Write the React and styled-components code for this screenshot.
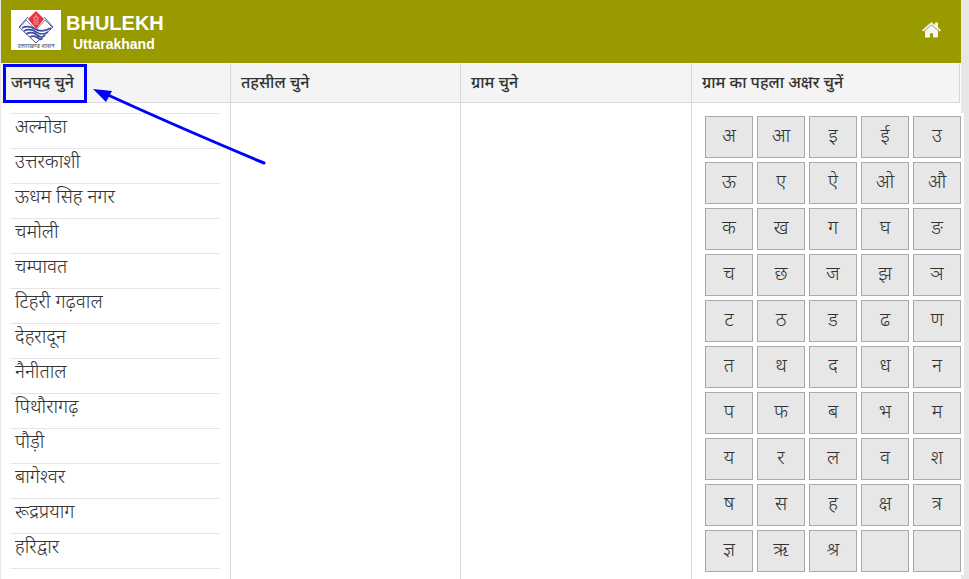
import React, { useState } from 'react'
import styled, { createGlobalStyle } from 'styled-components'

const GlobalStyle = createGlobalStyle`
    * {
        box-sizing: border-box;
    }
    body {
        margin: 0;
        background-color: #e7e7e7;
        color: #333;
        font-family: "Noto Sans", "Noto Sans Devanagari", "Liberation Sans", sans-serif;
    }
`

const Page = styled.div`
    position: relative;
    display: flex;
    flex-direction: column;
    min-height: 100vh;
    margin: 0 8px 0 1px;
    background-color: #fff;
`

const Header = styled.header`
    display: flex;
    height: 63px;
    padding: 10px 20px 0 10px;
    background-color: #999900;
`

const Logo = styled.svg`
    width: 50px;
    height: 40px;
    margin-right: 5px;
    background-color: #fff;
`

const Brand = styled.div`
    flex: 1;
    color: #fff;
    font-family: "Liberation Sans", Arial, sans-serif;
    font-weight: bold;
`

const BrandName = styled.h1`
    margin: 0;
    font-size: 20px;
    line-height: 26px;
`

const BrandState = styled.p`
    margin: 0 0 0 7px;
    font-size: 14px;
    line-height: 16px;
`

const HomeLink = styled.a`
    display: flex;
    align-items: center;
    height: 40px;
    color: #f5f5f5;
`

const Columns = styled.main`
    flex: 1;
    display: grid;
    grid-template-columns: 230fr 230fr 231fr 269fr;
`

const Column = styled.section`
    min-width: 0;
    border-right: 1px solid #d8d8d8;
    &:last-child {
        border-right: none;
    }
`

const ColumnHead = styled.div`
    height: 40px;
    padding-left: 10px;
    background-color: #f4f4f4;
    border-bottom: 1px solid #d8d8d8;
    ${Column}:last-child & {
        margin-right: 1px;
        border-right: 1px solid #d8d8d8;
    }
`

const ColumnTitle = styled.h2`
    position: relative;
    display: inline-block;
    margin: 0;
    font-size: 16px;
    font-weight: 500;
    line-height: 38px;
`

const Highlight = styled.span`
    position: absolute;
    top: 1px;
    bottom: -2px;
    left: -8px;
    right: -13px;
    border: 3px solid #0000ff;
`

const Pointer = styled.svg`
    position: absolute;
    top: 84px;
    left: 87px;
    width: 182px;
    height: 84px;
    pointer-events: none;
`

const DistrictList = styled.ul`
    list-style: none;
    margin: 10px;
    padding: 0;
    border-top: 1px solid #e5e5e5;
`

const District = styled.button`
    display: block;
    width: 100%;
    height: 35px;
    padding: 0 4px 9px;
    border: none;
    border-bottom: 1px solid #e5e5e5;
    background-color: ${props => props.$active ? '#f4f4f4' : 'transparent'};
    color: #333;
    font-family: inherit;
    font-size: 19px;
    font-weight: 300;
    line-height: 25px;
    text-align: left;
    cursor: pointer;
`

const LetterPanel = styled.div`
    display: grid;
    grid-template-columns: repeat(5, 1fr);
    gap: 4px;
    margin: 10px -3px 0 10px;
    padding: 3px;
    background-color: #fff;
`

const Letter = styled.button`
    height: 42px;
    padding: 0 0 4px;
    border: 1px solid #aaa;
    background-color: ${props => props.$active ? '#d4d4d4' : '#e7e7e7'};
    color: #333;
    font-family: inherit;
    font-size: 19px;
    font-weight: 300;
    line-height: 36px;
    cursor: pointer;
`

const districts = [
    'अल्मोडा', 'उत्तरकाशी', 'ऊधम सिह नगर', 'चमोली', 'चम्पावत', 'टिहरी गढ़वाल', 'देहरादून',
    'नैनीताल', 'पिथौरागढ़', 'पौड़ी', 'बागेश्वर', 'रूद्रप्रयाग', 'हरिद्वार'
]

const letters = [
    'अ', 'आ', 'इ', 'ई', 'उ',
    'ऊ', 'ए', 'ऐ', 'ओ', 'औ',
    'क', 'ख', 'ग', 'घ', 'ङ',
    'च', 'छ', 'ज', 'झ', 'ञ',
    'ट', 'ठ', 'ड', 'ढ', 'ण',
    'त', 'थ', 'द', 'ध', 'न',
    'प', 'फ', 'ब', 'भ', 'म',
    'य', 'र', 'ल', 'व', 'श',
    'ष', 'स', 'ह', 'क्ष', 'त्र',
    'ज्ञ', 'ऋ', 'श्र', '', ''
]

const StateLogo = () => (
    <Logo viewBox="0 0 50 40" role="img" aria-label="Uttarakhand">
        <path d="M17 7 L8 17 L25 33 L42 17 L33 7" fill="none" stroke="#4a56a8" />
        <path d="M9 17 L15 10 L25 20 L34 10 L41 17" fill="none" stroke="#4a56a8" strokeWidth="0.8" />
        <path d="M11 18 Q17 15 24 19 T40 18 M13 21 Q19 18 25 22 T37 22 M15 24 Q21 21 26 25 T34 25 M19 27 Q23 25 27 28 T31 28" fill="none" stroke="#3f4b9f" strokeWidth="1.7" />
        <path d="M25 1 L33 9 L25 19 L17 9 Z" fill="#e8323c" />
        <path d="M25 4 v3 M23 7 h4 v3 h-4 Z M22 12 h6 M23 14 h4" stroke="#f6b5b5" strokeWidth="0.8" fill="none" />
        <text x="25" y="38" textAnchor="middle" fontSize="6" fill="#555">उत्तराखण्ड शासन</text>
    </Logo>
)

const HomeIcon = () => (
    <svg width="19" height="16" viewBox="0 0 19 16" fill="currentColor" aria-hidden="true">
        <path d="M9.5 0 L13 3 V0.5 H16 V5.6 L19 8.3 L18 9.5 L9.5 2.4 L1 9.5 L0 8.3 Z" />
        <path d="M9.5 3.3 L16 8.8 V15.5 H11 V11.2 H8 V15.5 H3 V8.8 Z" />
    </svg>
)

const App = () => {
    const [district, setDistrict] = useState(null)
    const [letter, setLetter] = useState(null)

  return (
    <>
        <GlobalStyle />
        <Page>
            <Header>
                <StateLogo />
                <Brand>
                    <BrandName>BHULEKH</BrandName>
                    <BrandState>Uttarakhand</BrandState>
                </Brand>
                <HomeLink href="#" aria-label="Home"><HomeIcon /></HomeLink>
            </Header>
            <Columns>
                <Column>
                    <ColumnHead>
                        <ColumnTitle>जनपद चुने<Highlight /></ColumnTitle>
                    </ColumnHead>
                    <DistrictList>
                        {
                            districts.map((item) => (
                                <li key={item}>
                                    <District $active={item === district} onClick={() => setDistrict(item)}>{item}</District>
                                </li>
                            ))
                        }
                    </DistrictList>
                </Column>
                <Column>
                    <ColumnHead><ColumnTitle>तहसील चुने</ColumnTitle></ColumnHead>
                </Column>
                <Column>
                    <ColumnHead><ColumnTitle>ग्राम चुने</ColumnTitle></ColumnHead>
                </Column>
                <Column>
                    <ColumnHead><ColumnTitle>ग्राम का पहला अक्षर चुनें</ColumnTitle></ColumnHead>
                    <LetterPanel>
                        {
                            letters.map((item, i) => (
                                <Letter key={i} $active={item !== '' && item === letter} onClick={() => setLetter(item)}>{item}</Letter>
                            ))
                        }
                    </LetterPanel>
                </Column>
            </Columns>
            <Pointer viewBox="0 0 182 84" aria-hidden="true">
                <path d="M20 11 Q90 43 176 79" fill="none" stroke="#0000ff" strokeWidth="3" strokeLinecap="round" />
                <path d="M5 5 L24 7 L18 18 Z" fill="#0000ff" />
            </Pointer>
        </Page>
    </>
  )
}

export default App
